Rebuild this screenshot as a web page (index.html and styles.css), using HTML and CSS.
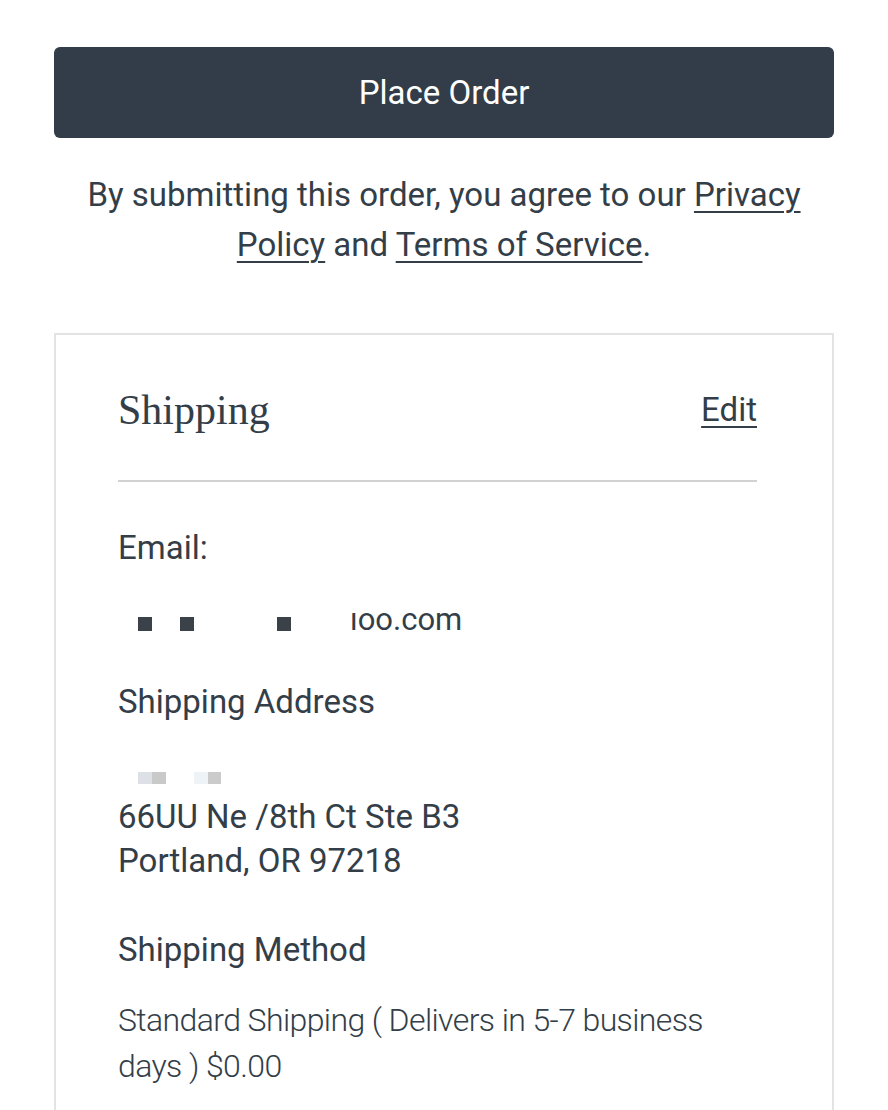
FILE: index.html
```html
<!DOCTYPE html>
<html lang="en">
<head>
<meta charset="utf-8">
<title>Checkout</title>
<link rel="stylesheet" href="styles.css">
</head>
<body>
<main class="page">
  <button class="place-order" type="button">Place Order</button>
  <p class="consent">By submitting this order, you agree to our <a href="#">Privacy Policy</a> and <a href="#">Terms of Service</a>.</p>

  <section class="card">
    <header class="card-head">
      <h2 class="card-title">Shipping</h2>
      <a href="#" class="edit">Edit</a>
    </header>

    <div class="label email-label">Email:</div>
    <div class="email-value">
      <span class="redact r1"></span>
      <span class="redact r2"></span>
      <span class="redact r3"></span>
      <span class="email-tail">ıoo.com</span>
    </div>

    <div class="label addr-label">Shipping Address</div>
    <div class="address">
      <div class="addr-line redact-line">
        <span class="blk b1"></span><span class="blk b2"></span><span class="blk b3"></span><span class="blk b4"></span>
      </div>
      <div class="addr-line">66UU Ne /8th Ct Ste B3</div>
      <div class="addr-line">Portland, OR 97218</div>
    </div>

    <div class="label method-label">Shipping Method</div>
    <p class="method">Standard Shipping ( Delivers in 5-7 business days ) $0.00</p>
  </section>
</main>
</body>
</html>
```
FILE: styles.css
```css
html, body {
  margin: 0;
  padding: 0;
  background: #ffffff;
}
body {
  font-family: Roboto, "Liberation Sans", sans-serif;
  color: #333e48;
  font-size: 33px;
}
.page {
  padding: 47px 54px 0 54px;
}
.place-order {
  display: block;
  width: 100%;
  height: 91px;
  border: none;
  border-radius: 6px;
  background: #323d49;
  color: #ffffff;
  font-family: Roboto, "Liberation Sans", sans-serif;
  font-size: 33px;
  padding: 0;
}
.consent {
  margin: 32px 0 0 0;
  text-align: center;
  line-height: 50px;
  font-size: 33px;
  color: #333e48;
}
.consent a {
  color: #333e48;
  text-decoration: underline;
  text-decoration-thickness: 2px;
  text-underline-offset: 5px;
}
.card {
  margin-top: 63px;
  border: 2px solid #e3e3e3;
  border-bottom: none;
  padding: 0 75px 40px 62px;
}
.card-head {
  display: flex;
  justify-content: space-between;
  align-items: center;
  padding-top: 50px;
  padding-bottom: 45px;
  border-bottom: 2px solid #d2d2d2;
}
.card-title {
  margin: 0;
  font-family: "Liberation Serif", "DejaVu Serif", serif;
  font-weight: normal;
  font-size: 42px;
  line-height: 50px;
  color: #333e48;
}
.edit {
  color: #333e48;
  font-size: 33px;
  line-height: 50px;
  text-decoration: underline;
  text-decoration-thickness: 2px;
  text-underline-offset: 5px;
}
.label {
  line-height: 40px;
}
.email-label {
  margin-top: 46px;
}
.email-value {
  margin-top: 32px;
  height: 40px;
  display: flex;
  align-items: center;
}
.redact {
  width: 14px;
  height: 14px;
  background: #3b4149;
  flex: none;
}
.r1 { margin-left: 20px; margin-top: 8px; }
.r2 { margin-left: 28px; margin-top: 8px; }
.r3 { margin-left: 83px; margin-top: 8px; }
.email-tail {
  margin-left: 59px;
  font-size: 31px;
  line-height: 40px;
  color: #333e48;
}
.addr-label {
  margin-top: 42px;
}
.address {
  margin-top: 29px;
}
.addr-line {
  line-height: 44px;
  height: 44px;
}
.redact-line {
  display: flex;
  align-items: flex-start;
  padding-top: 21px;
  box-sizing: border-box;
}
.blk {
  height: 12px;
  width: 14px;
  flex: none;
}
.b1 { margin-left: 20px; background: #dde0e6; }
.b2 { background: #c9c9c9; }
.b3 { margin-left: 28px; background: #eef3f7; }
.b4 { background: #cbcbcb; width: 13px; }
.method-label {
  margin-top: 47px;
}
.method {
  margin: 27px 0 0 0;
  font-size: 32px;
  font-weight: 300;
  letter-spacing: -0.6px;
  line-height: 46px;
  color: #333e48;
}
```
